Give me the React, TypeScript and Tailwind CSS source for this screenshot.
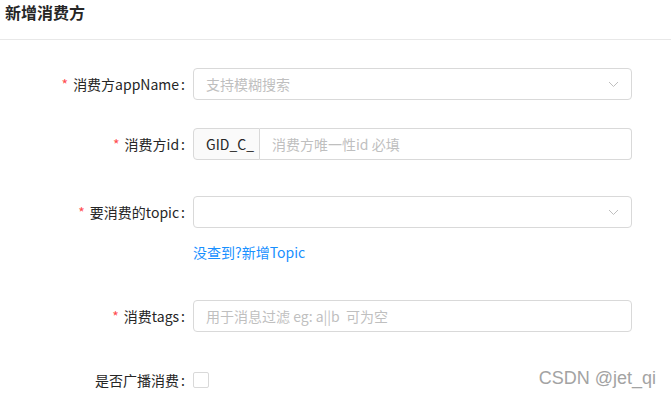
import { ReactNode } from "react";

const font = "font-['Noto_Sans_CJK_SC','Liberation_Sans',sans-serif]";

function Label({ text, required }: { text: string; required?: boolean }) {
  return (
    <div className="w-[193px] shrink-0 pr-[8px] text-right text-[14px] text-[#262626] leading-[22px]">
      {required && <span className="mr-[5px] text-[#ff4d4f]">*</span>}
      {text}
      <span className="ml-[2px]">:</span>
    </div>
  );
}

function Arrow() {
  return (
    <svg width="11" height="7" viewBox="0 0 11 7" className="shrink-0">
      <path d="M1 1 L5.5 5.5 L10 1" fill="none" stroke="#bfbfbf" strokeWidth="1" />
    </svg>
  );
}

function Row({ children, className }: { children: ReactNode; className?: string }) {
  return <div className={"flex h-[32px] items-center " + (className ?? "")}>{children}</div>;
}

export default function App() {
  return (
    <div className={"relative h-[399px] w-[671px] bg-white " + font}>
      <div className="h-[40px] border-b border-[#e8e8e8] px-[5px] pt-[2px]">
        <h2 className="text-[16px] font-semibold leading-[20px] text-[#262626]">新增消费方</h2>
      </div>

      <div className="pt-[28px]">
        <Row>
          <Label text="消费方appName" required />
          <div className="flex h-[32px] w-[439px] items-center justify-between rounded-[4px] border border-[#d9d9d9] pl-[12px] pr-[12px]">
            <span className="text-[14px] text-[#bfbfbf]">支持模糊搜索</span>
            <Arrow />
          </div>
        </Row>

        <Row className="mt-[28px]">
          <Label text="消费方id" required />
          <div className="flex h-[32px] w-[439px]">
            <div className="flex w-[67px] items-center rounded-l-[4px] border border-[#d9d9d9] bg-[#fafafa] px-[12px] text-[14px] text-[#262626]">
              GID_C_
            </div>
            <div className="flex flex-1 items-center rounded-r-[4px] border border-l-0 border-[#d9d9d9] px-[12px] text-[14px] text-[#bfbfbf]">
              消费方唯一性id 必填
            </div>
          </div>
        </Row>

        <Row className="mt-[36px]">
          <Label text="要消费的topic" required />
          <div className="flex h-[32px] w-[439px] items-center justify-end rounded-[4px] border border-[#d9d9d9] pr-[12px]">
            <Arrow />
          </div>
        </Row>

        <div className="mt-[12px] pl-[193px] text-[14px] leading-[24px] text-[#1890ff]">没查到?新增Topic</div>

        <Row className="mt-[36px]">
          <Label text="消费tags" required />
          <div className="flex h-[32px] w-[439px] items-center rounded-[4px] border border-[#d9d9d9] px-[12px] text-[14px] whitespace-pre text-[#bfbfbf]">
            用于消息过滤 eg: a||b  可为空
          </div>
        </Row>

        <Row className="mt-[32px]">
          <Label text="是否广播消费" />
          <div className="h-[16px] w-[16px] rounded-[2px] border border-[#d9d9d9] bg-white" />
        </Row>
      </div>

      <div className="absolute bottom-[10px] right-[15px] font-['Liberation_Sans',sans-serif] text-[18px] leading-[22px] text-[#a3a3a3]">
        CSDN @jet_qi
      </div>
    </div>
  );
}
